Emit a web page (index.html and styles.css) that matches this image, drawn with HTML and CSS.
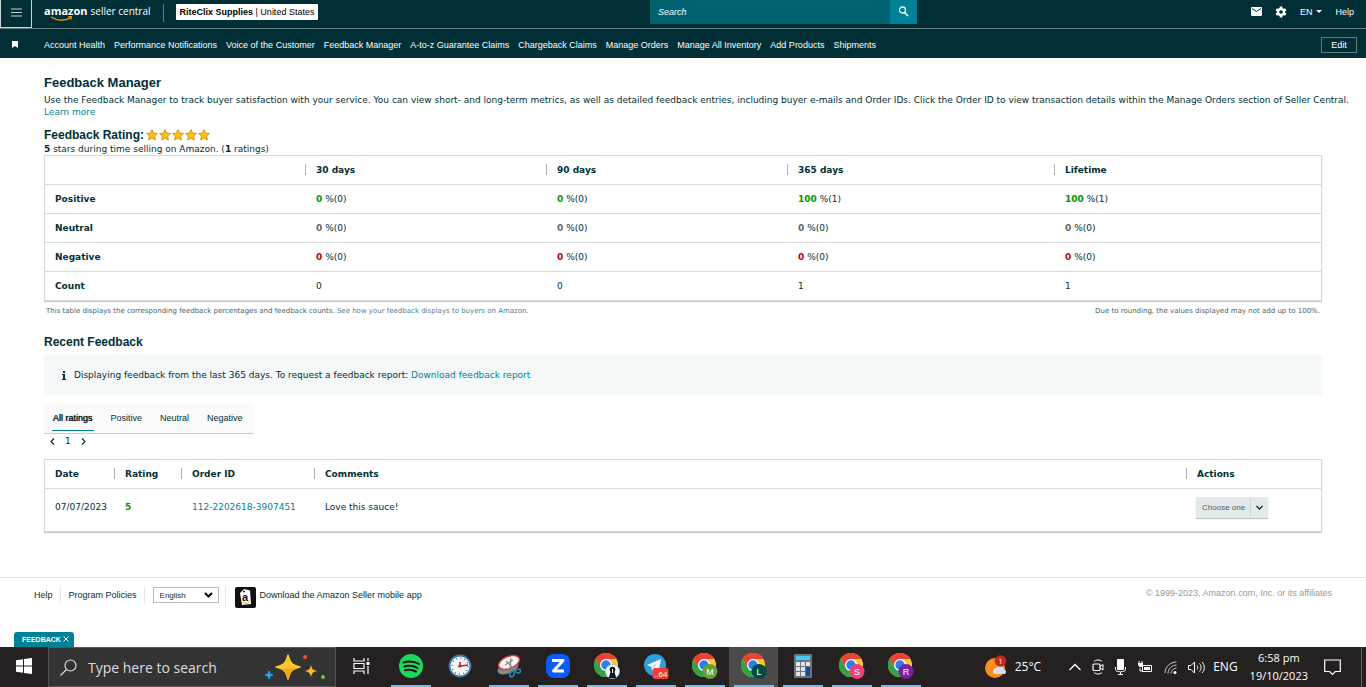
FILE: index.html
```html
<!DOCTYPE html>
<html lang="en">
<head>
    <meta charset="UTF-8">
    <meta name="viewport" content="width=device-width, initial-scale=1.0">
    <title>Feedback Manager</title>
    <link rel="stylesheet" href="styles.css">
</head>
<body>

<!-- shared shapes -->
<svg class="defs" aria-hidden="true">
    <symbol id="star" viewBox="0 0 12 12"><path d="M6 .6l1.6 3.5 3.9.4-2.9 2.6.8 3.9L6 9.1 2.6 11l.8-3.9L.5 4.5l3.9-.4z" fill="#fcbf14" stroke="#d98d16" stroke-width=".9"/></symbol>
    <symbol id="chrome" viewBox="0 0 24 24">
        <circle cx="12" cy="12" r="12" fill="#fcc934"/>
        <path d="M12 6H22.4A12 12 0 0 0 1.6 6L6.8 15z" fill="#ea4335"/>
        <path d="M1.6 6A12 12 0 0 0 12 24L17.2 15 6.8 15z" fill="#34a049"/>
        <circle cx="12" cy="12" r="6" fill="#fff"/>
        <circle cx="12" cy="12" r="4.7" fill="#2f7de9"/>
    </symbol>
</svg>

<header>
    <div class="topbar">
        <div class="brand">
            <button class="menu" aria-label="Menu"><svg width="11" height="9" viewBox="0 0 11 9"><path d="M0 1h11M0 4.500h11M0 8h11" stroke="#dfe5e6" stroke-width=".9"/></svg></button>
            <a class="logo" href="#"><b>amazon</b><span>seller central</span>
                <svg width="24" height="6" viewBox="0 0 24 6"><path d="M1 1c6 4 14 4 19 1M18 .8l3.500-.2-.8 3" fill="none" stroke="#f90" stroke-width="1.200"/></svg>
            </a>
            <button class="account"><b>RiteClix Supplies</b> | United States</button>
        </div>
        <form class="search">
            <input type="text" placeholder="Search" aria-label="Search">
            <button type="button" aria-label="Go"><svg width="11" height="11" viewBox="0 0 11 11"><circle cx="4.500" cy="4" r="3" fill="none" stroke="#fff" stroke-width="1.300"/><path d="M6.500 6.500l3.500 3.500" stroke="#fff" stroke-width="1.600"/></svg></button>
        </form>
        <div class="tools">
            <a href="#" aria-label="Messages"><svg width="11" height="9" viewBox="0 0 11 9"><rect width="11" height="9" rx="1" fill="#fff"/><path d="M1 1.500l4.500 3L10 1.500" fill="none" stroke="#002f36"/></svg></a>
            <a href="#" aria-label="Settings"><svg width="12" height="12" viewBox="0 0 12 12"><g stroke="#fff" stroke-width="2.600"><path d="M6 .5v11M1.200 3.300l9.600 5.400M10.800 3.300L1.200 8.700"/></g><circle cx="6" cy="6" r="4.200" fill="#fff"/><circle cx="6" cy="6" r="1.800" fill="#002f36"/></svg></a>
            <a href="#">EN <svg width="6" height="3" viewBox="0 0 6 3"><path d="M0 0h6L3 3z" fill="#fff"/></svg></a>
            <a href="#">Help</a>
        </div>
    </div>
    <nav class="shortcuts">
        <svg class="bookmark" width="6" height="7" viewBox="0 0 6 7"><path d="M0 0h6v7L3 5 0 7z" fill="#fff"/></svg>
        <a href="#">Account Health</a>
        <a href="#">Performance Notifications</a>
        <a href="#">Voice of the Customer</a>
        <a href="#">Feedback Manager</a>
        <a href="#">A-to-z Guarantee Claims</a>
        <a href="#">Chargeback Claims</a>
        <a href="#">Manage Orders</a>
        <a href="#">Manage All Inventory</a>
        <a href="#">Add Products</a>
        <a href="#">Shipments</a>
        <button class="edit">Edit</button>
    </nav>
</header>

<main>
    <h1>Feedback Manager</h1>
    <p class="intro">Use the Feedback Manager to track buyer satisfaction with your service. You can view short- and long-term metrics, as well as detailed feedback entries, including buyer e-mails and Order IDs. Click the Order ID to view transaction details within the Manage Orders section of Seller Central.<br><a href="#">Learn more</a></p>

    <h2 class="rating">Feedback Rating:
        <span class="stars"><svg><use href="#star"/></svg><svg><use href="#star"/></svg><svg><use href="#star"/></svg><svg><use href="#star"/></svg><svg><use href="#star"/></svg></span>
    </h2>
    <p class="summary"><b>5</b> stars during time selling on Amazon. (<b>1</b> ratings)</p>

    <table class="metrics">
        <thead>
            <tr><td></td><th>30 days</th><th>90 days</th><th>365 days</th><th>Lifetime</th></tr>
        </thead>
        <tbody>
            <tr class="positive"><th>Positive</th><td><b>0</b> %(0)</td><td><b>0</b> %(0)</td><td><b>100</b> %(1)</td><td><b>100</b> %(1)</td></tr>
            <tr class="neutral"><th>Neutral</th><td><b>0</b> %(0)</td><td><b>0</b> %(0)</td><td><b>0</b> %(0)</td><td><b>0</b> %(0)</td></tr>
            <tr class="negative"><th>Negative</th><td><b>0</b> %(0)</td><td><b>0</b> %(0)</td><td><b>0</b> %(0)</td><td><b>0</b> %(0)</td></tr>
            <tr><th>Count</th><td>0</td><td>0</td><td>1</td><td>1</td></tr>
        </tbody>
    </table>
    <div class="notes">
        <span>This table displays the corresponding feedback percentages and feedback counts. <a href="#">See how your feedback displays to buyers on Amazon.</a></span>
        <span>Due to rounding, the values displayed may not add up to 100%.</span>
    </div>

    <h2>Recent Feedback</h2>
    <div class="info">
        <svg width="4" height="9" viewBox="0 0 4 9"><path d="M1 0h2v2H1zM0 3h3v5h1v1H0V8h1V4H0z" fill="#002f36"/></svg>
        <span>Displaying feedback from the last 365 days. To request a feedback report: <a href="#">Download feedback report</a></span>
    </div>

    <div class="tabs">
        <a class="active" href="#">All ratings</a>
        <a href="#">Positive</a>
        <a href="#">Neutral</a>
        <a href="#">Negative</a>
    </div>
    <div class="pager">
        <button aria-label="Previous"><svg width="5" height="7" viewBox="0 0 5 7"><path d="M4 .5l-3 3 3 3" fill="none" stroke="#002f36" stroke-width="1.200"/></svg></button>
        <span>1</span>
        <button aria-label="Next"><svg width="5" height="7" viewBox="0 0 5 7"><path d="M1 .5l3 3-3 3" fill="none" stroke="#002f36" stroke-width="1.200"/></svg></button>
    </div>

    <table class="entries">
        <thead>
            <tr><th>Date</th><th>Rating</th><th>Order ID</th><th>Comments</th><th>Actions</th></tr>
        </thead>
        <tbody>
            <tr>
                <td>07/07/2023</td>
                <td class="score">5</td>
                <td><a href="#">112-2202618-3907451</a></td>
                <td>Love this sauce!</td>
                <td><button class="choose"><span>Choose one</span><svg width="7" height="5" viewBox="0 0 7 5"><path d="M.5 1l3 3 3-3" fill="none" stroke="#002f36" stroke-width="1.300"/></svg></button></td>
            </tr>
        </tbody>
    </table>
</main>

<footer>
    <a href="#">Help</a>
    <a href="#">Program Policies</a>
    <div class="language"><select aria-label="Language"><option>English</option></select><svg width="9" height="6" viewBox="0 0 9 6"><path d="M1 1l3.500 3.500L8 1" fill="none" stroke="#000" stroke-width="2"/></svg></div>
    <a class="app" href="#"><svg width="21" height="21" viewBox="0 0 21 21"><rect width="21" height="21" rx="2" fill="#111"/><path d="M5 6l4-4 6 1.500L16 17l-9 1z" fill="#fff"/><circle cx="9" cy="4.500" r="1" fill="#111"/><text x="7" y="14" font-size="11" font-weight="bold" fill="#111">a</text><path d="M8 15.500c2 1.200 4 1 6-.5" fill="none" stroke="#f90"/></svg>Download the Amazon Seller mobile app</a>
    <span class="copyright">© 1999-2023, Amazon.com, Inc. or its affiliates</span>
</footer>

<button class="feedback-tab">FEEDBACK <svg width="6" height="6" viewBox="0 0 6 6"><path d="M.5 .5l5 5M5.500 .5l-5 5" stroke="#fff"/></svg></button>

<div class="taskbar">
    <button class="start" aria-label="Start"><svg width="16" height="16" viewBox="0 0 16 16"><path d="M0 2.200l7-1v6.300H0zM8 1.100L16 0v7.500H8zM0 8.500h7v6.300l-7-1zM8 8.500h8V16l-8-1.100z" fill="#fff"/></svg></button>
    <label class="task-search">
        <svg width="17" height="17" viewBox="0 0 17 17"><circle cx="10.500" cy="6.500" r="5.500" fill="none" stroke="#ddd" stroke-width="1.200"/><path d="M6.500 10.500l-6 6" stroke="#ddd" stroke-width="1.200"/></svg>
        <input type="text" placeholder="Type here to search">
        <svg width="60" height="26" viewBox="0 0 60 26"><path d="M23 1c2 8 4 10 12 12-8 2-10 4-12 12-2-8-4-10-12-12 8-2 10-4 12-12z" fill="#fdc52f" stroke="#fdc52f" stroke-width="1.500" stroke-linejoin="round"/><path d="M23 25c-2-8-4-10-12-12 8 3 16 2 24 0-8 2-10 4-12 12z" fill="#f5a318"/><path d="M46 11c1 4 2 5 6 6-4 1-5 2-6 6-1-4-2-5-6-6 4-1 5-2 6-6z" fill="#fdb92b"/><path d="M4 17c1 3 1 3 4 4-3 1-3 1-4 4-1-3-1-3-4-4 3-1 3-1 4-4z" fill="#1ba9f5" stroke="#1ba9f5"/><circle cx="40" cy="3" r="2" fill="#f2592a"/><circle cx="58" cy="23" r="2" fill="#7cc142"/></svg>
    </label>
    <button class="task" aria-label="Task view"><svg width="17" height="16" viewBox="0 0 17 16"><path d="M1 0v3h10V0M1 16v-3h10v3M1 5.500h10v5H1zM15 0v3M15 8v8" fill="none" stroke="#fff" stroke-width="1.200"/><rect x="13.500" y="4" width="3" height="3" fill="#fff"/></svg></button>
    <button class="task open" aria-label="Spotify"><svg width="24" height="24" viewBox="0 0 24 24"><circle cx="12" cy="12" r="12" fill="#1ed760"/><path d="M4.500 8.500c5-1.500 11-1 15.500 1.500M5.500 12.500c4.500-1.200 9-.8 13 1.500M6 16.200c4-1 7.500-.6 11 1.300" fill="none" stroke="#191414" stroke-width="2" stroke-linecap="round"/></svg></button>
    <button class="task" aria-label="Clock"><svg width="24" height="24" viewBox="0 0 24 24"><circle cx="12" cy="12" r="10.500" fill="#f4f6f8" stroke="#3f78ad" stroke-width="1.800"/><circle cx="12" cy="12" r="8" fill="none" stroke="#555" stroke-width="1.300" stroke-dasharray="1 3.200"/><path d="M10 12.500l10-1.500M12 12V8" stroke="#c4242b" stroke-width="1.500"/><circle cx="12" cy="12" r="1.500" fill="#c4242b"/></svg></button>
    <button class="task open" aria-label="Snipping Tool"><svg width="24" height="24" viewBox="0 0 24 24"><ellipse cx="11" cy="14" rx="11" ry="5.500" fill="#888" transform="rotate(-22 11 14)"/><ellipse cx="12" cy="8.500" rx="11" ry="6" fill="#f3f3f3" stroke="#d23b40" stroke-width="1.400" transform="rotate(-22 12 8.500)"/><path d="M9 7l8 8M14 4l-1 12M8 11l8-5" stroke="#888" stroke-width="1.200"/><ellipse cx="15" cy="20" rx="2" ry="3" fill="none" stroke="#2286b8" stroke-width="1.600" transform="rotate(25 15 20)"/><ellipse cx="21" cy="17" rx="2.500" ry="2" fill="none" stroke="#2286b8" stroke-width="1.600"/></svg></button>
    <button class="task open" aria-label="Zoom"><svg width="24" height="24" viewBox="0 0 24 24"><rect width="24" height="24" rx="8" fill="#0b5cff"/><path d="M6 6.500h11L7.500 17H18" fill="none" stroke="#fff" stroke-width="3" stroke-linejoin="round"/></svg></button>
    <button class="task open" aria-label="Chrome"><svg width="26" height="26" viewBox="0 0 26 26"><use href="#chrome" width="24" height="24"/><circle cx="18.500" cy="18.500" r="7" fill="#f5f8fa" stroke="#8ccbe8" stroke-width=".8"/><circle cx="18.500" cy="16.500" r="2.800" fill="#111"/><path d="M16.800 18h3.400l2 7h-7.400z" fill="#111"/><path d="M18.500 16v4" stroke="#fff"/></svg></button>
    <button class="task open" aria-label="Telegram"><svg width="26" height="26" viewBox="0 0 26 26"><circle cx="12" cy="12" r="11" fill="#2ba0d9"/><path d="M4 12l14-6-2.500 13-4-3.500L9 18l-.5-4z" fill="#fff"/><path d="M8.500 14L15 9l-4.500 6" fill="#b5d4e8"/><rect x="9.500" y="15" width="16" height="11" rx="2.500" fill="#f13b36"/><text x="11" y="24" font-size="8" fill="#fff">..64</text></svg></button>
    <button class="task open" aria-label="Chrome, profile M"><svg width="26" height="26" viewBox="0 0 26 26"><use href="#chrome" width="24" height="24"/><circle cx="18" cy="18.500" r="7.500" fill="#679f38"/><text x="18" y="21.500" text-anchor="middle" font-size="9" fill="#fff">M</text></svg></button>
    <button class="task open current" aria-label="Chrome, profile L"><svg width="26" height="26" viewBox="0 0 26 26"><use href="#chrome" width="24" height="24"/><circle cx="18" cy="18.500" r="7.500" fill="#004d40"/><text x="18" y="21.500" text-anchor="middle" font-size="9" fill="#fff">L</text></svg></button>
    <button class="task open" aria-label="Calculator"><svg width="18" height="24" viewBox="0 0 18 24"><rect width="18" height="24" rx="1" fill="#69747d"/><rect x="2" y="2" width="14" height="4" fill="#43cdf5"/><path d="M2 8h4v4H2zM7 8h4v4H7zM12 8h4v4h-4zM2 13h4v4H2zM7 13h4v4H7zM2 18h4v4H2zM7 18h4v4H7z" fill="#dfe4e8"/><path d="M12 13h4v9h-4z" fill="#164b8f"/></svg></button>
    <button class="task open" aria-label="Chrome, profile S"><svg width="26" height="26" viewBox="0 0 26 26"><use href="#chrome" width="24" height="24"/><circle cx="18" cy="18.500" r="7.500" fill="#ec407a"/><text x="18" y="21.500" text-anchor="middle" font-size="9" fill="#fff">S</text></svg></button>
    <button class="task open" aria-label="Chrome, profile R"><svg width="26" height="26" viewBox="0 0 26 26"><use href="#chrome" width="24" height="24"/><circle cx="18" cy="18.500" r="7.500" fill="#7b1fa2"/><text x="18" y="21.500" text-anchor="middle" font-size="9" fill="#fff">R</text></svg></button>
    <div class="tray">
        <span class="weather"><svg width="22" height="24" viewBox="0 0 22 24"><circle cx="10" cy="13" r="10" fill="#f58f1d"/><path d="M9 19a3.500 3.500 0 0 1 2-6 4.500 4.500 0 0 1 8 1 3 3 0 0 1 1 5z" fill="#cfe0f8"/><circle cx="15.500" cy="6" r="5.800" fill="#c42b1c"/><text x="15.500" y="9" text-anchor="middle" font-size="8" fill="#fff">1</text></svg>25°C</span>
        <span class="status">
            <svg width="12" height="8" viewBox="0 0 12 8"><path d="M.5 7L6 1.500 11.500 7" fill="none" stroke="#fff" stroke-width="1.300"/></svg>
            <svg width="12" height="16" viewBox="0 0 12 16"><rect x="1" y="5" width="7" height="6.500" rx="1" fill="none" stroke="#fff" stroke-width="1.200"/><path d="M8 7.500l3-2v5.500l-3-2M2 2.500c2-2 6-2 8 0M2 13.500c2 2 6 2 8 0" fill="none" stroke="#fff"/></svg>
            <svg width="11" height="16" viewBox="0 0 11 16"><rect x="2" y="0" width="7" height="11" rx="1" fill="#fff"/><path d="M.5 8v2.500c0 3 10 3 10 0V8M5.500 13v2.500M3 15.500h5" fill="none" stroke="#fff"/></svg>
            <svg width="16" height="12" viewBox="0 0 16 12"><path d="M5.500 4.500h9v6h-9zM3 7v3h3M2 0v3M5 0v3" fill="none" stroke="#fff"/><path d="M1 2h5v2L4.500 6h-2L1 4zM7 6h6v3H7z" fill="#fff"/></svg>
            <svg width="13" height="13" viewBox="0 0 13 13"><path d="M1 12C1 6 6 1 12.500 1M4 12.500C4 8 8 4 12.500 4M7 12.500c0-3 3-5.500 5.500-5.500" fill="none" stroke="#ccc"/><circle cx="11" cy="11.500" r="1.500" fill="#fff"/></svg>
            <svg width="17" height="13" viewBox="0 0 17 13"><path d="M.5 4.500h2.500l3.500-3.500v11l-3.500-3.500H.5zM9 4.500c1 1 1 3 0 4M11.500 2.500c2 2 2 6 0 8M14 1c3 3 3 8 0 11" fill="none" stroke="#fff"/></svg>
        </span>
        <span>ENG</span>
        <span class="clock">6:58 pm<br>19/10/2023</span>
        <button class="notices" aria-label="Notifications"><svg width="17" height="17" viewBox="0 0 17 17"><path d="M.7 1h15.600v11.500h-5L8.500 15.500l-3-3H.7z" fill="none" stroke="#fff" stroke-width="1.200"/></svg></button>
    </div>
</div>

</body>
</html>
```
FILE: styles.css
```css
* {
    box-sizing: border-box;
}
body {
    margin: 0;
    min-height: 100vh;
    display: flex;
    flex-direction: column;
    font-family: "DejaVu Sans", Verdana, sans-serif;
    font-size: 9px;
    line-height: 12px;
    color: #002f36;
    background-color: #fff;
}
button, input, select {
    font-family: "Liberation Sans", Arial, sans-serif;
    font-size: 9px;
    padding: 0;
    border: none;
    border-radius: 0;
    background: none;
    color: inherit;
}
button {
    cursor: pointer;
}
a {
    color: #008296;
    text-decoration: none;
}
svg {
    flex: none;
}
.defs {
    display: none;
}

/* header */
header {
    background-color: #002f36;
    color: #fff;
    font-family: "Liberation Sans", Arial, sans-serif;
}
header a {
    color: #fff;
}
.topbar {
    display: grid;
    grid-template-columns: 650fr 267px 449fr;
    height: 29px;
    border-bottom: 1px solid #66797c;
}
.brand {
    display: flex;
    align-items: flex-start;
}
.menu {
    width: 32px;
    height: 28px;
    border: 1px solid #ccd5d6;
    border-top: none;
}
.logo {
    display: grid;
    grid-template-columns: auto auto;
    column-gap: 3px;
    margin: 4px 12px 0;
    padding-right: 12px;
    border-right: 1px solid #66797c;
    font-family: "Open Sans", sans-serif;
    font-size: 11px;
    line-height: 14px;
}
.logo span {
    font-size: 10px;
}
.logo svg {
    margin: -2px 0 0 6px;
}
.account {
    margin-top: 4px;
    height: 16px;
    padding: 0 4px;
    background-color: #fff;
    border-radius: 1px;
    color: #000;
}
.search {
    display: flex;
    height: 24px;
}
.search input {
    flex: 1;
    min-width: 0;
    padding: 0 8px;
    background-color: #006170;
}
.search input::placeholder {
    color: #fff;
    font-style: italic;
    opacity: 1;
}
.search button {
    width: 27px;
    background-color: #008296;
}
.tools {
    display: flex;
    justify-content: flex-end;
    align-items: center;
    gap: 13px;
    height: 23px;
    padding-right: 12px;
}
.tools a {
    display: flex;
    align-items: center;
    gap: 4px;
}
.shortcuts {
    display: flex;
    align-items: center;
    gap: 9px;
    height: 29px;
    padding: 2px 9px 0 12px;
    white-space: nowrap;
}
.bookmark {
    margin-right: 17px;
}
.edit {
    margin-left: auto;
    width: 36px;
    height: 16px;
    border: 1px solid #66797c;
}

/* page */
main {
    flex: 1;
    padding: 17px 44px 44px;
}
h1, h2 {
    margin: 0;
    font-family: "Liberation Sans", Arial, sans-serif;
    font-size: 13px;
    line-height: 16px;
}
h2 {
    font-size: 12px;
}
p {
    margin: 0;
}
.intro {
    margin: 3px 0 9px;
    white-space: nowrap;
}
.rating {
    display: flex;
    align-items: center;
    gap: 2px;
}
.stars {
    display: flex;
    gap: 1px;
}
.stars svg {
    width: 12px;
    height: 12px;
}
table {
    width: 100%;
    table-layout: fixed;
    border-collapse: separate;
    border-spacing: 0;
    border: 1px solid #d5dbdb;
    box-shadow: 0 1px 1px #ccc;
}
th, td {
    height: 29px;
    padding: 0 11px;
    text-align: left;
}
th:first-child, td:first-child {
    padding: 0 10px;
}
thead th, thead td {
    height: 28px;
}
tbody th, tbody td {
    border-top: 1px solid #d5dbdb;
}
thead th {
    background: linear-gradient(#aab7b8, #aab7b8) no-repeat 0 8px / 1px 11px;
}
.metrics th:nth-child(1), .metrics td:nth-child(1) {
    width: 260px;
}
.metrics thead th:nth-child(2), .metrics thead th:nth-child(3) {
    width: 241px;
}
.positive b, .score {
    color: #090;
    font-weight: bold;
}
.neutral b {
    color: #666;
}
.negative b {
    color: #b00;
}
.notes {
    display: flex;
    justify-content: space-between;
    margin: 4px 2px 17px;
    font-size: 7px;
    color: #4a5f63;
}
.notes a {
    color: #4a7f95;
}
.info {
    display: flex;
    align-items: center;
    gap: 8px;
    height: 40px;
    margin-top: 5px;
    padding: 0 18px;
    background-color: #f4f8f9;
}
.tabs {
    display: flex;
    gap: 16px;
    width: fit-content;
    height: 30px;
    margin-top: 9px;
    padding: 0 10px 2px 8px;
    background-color: #fafafa;
    border-bottom: 1px solid #ccc;
    font-family: "Liberation Sans", Arial, sans-serif;
}
.tabs a {
    padding: 8px 1px 0;
    color: #002f36;
}
.tabs .active {
    border-bottom: 1px solid #008296;
    color: #000;
    text-shadow: 0 0 1px #002f36;
}
.pager {
    display: flex;
    align-items: center;
    gap: 10px;
    height: 14px;
    margin-bottom: 11px;
    padding-left: 6px;
}
.pager button {
    display: flex;
}
.entries th:nth-child(1) {
    width: 69px;
    background: none;
}
.entries th:nth-child(2) {
    width: 67px;
}
.entries th:nth-child(3) {
    width: 133px;
}
.entries th:nth-child(5) {
    width: 135px;
}
.entries tbody td {
    height: 43px;
    padding-bottom: 7px;
}
.entries td:last-child {
    padding-left: 10px;
}
.choose {
    display: flex;
    align-items: center;
    height: 21px;
    margin-top: 2px;
    background-color: #e3eaeb;
    border-radius: 1px;
    box-shadow: 0 1px 1px #bbb;
    font-size: 8px;
    color: #4a5f63;
}
.choose span {
    padding: 0 5px 0 6px;
    border-right: 1px solid #ccd5d6;
    line-height: 20px;
}
.choose svg {
    margin: 0 5px;
}

/* footer */
footer {
    display: flex;
    align-items: flex-start;
    height: 55px;
    padding: 9px 34px 0;
    border-top: 1px solid #e3e6e6;
    font-family: "Liberation Sans", Arial, sans-serif;
    line-height: 16px;
}
footer a {
    padding-right: 7px;
    border-right: 1px solid #e3e6e6;
    margin-right: 8px;
    color: #002f36;
}
.language {
    display: flex;
    align-items: center;
    width: 66px;
    height: 16px;
    border: 1px solid #bbb;
}
.language select {
    flex: 1;
    appearance: none;
    padding-left: 6px;
    font-size: 8px;
}
.language svg {
    margin-right: 5px;
}
.app {
    display: flex;
    gap: 4px;
    margin-left: 6px;
    padding-left: 9px;
    border-left: 1px solid #e3e6e6;
    border-right: none;
}
.copyright {
    margin-left: auto;
    line-height: 12px;
    color: #999;
}
.feedback-tab {
    align-self: flex-start;
    height: 15px;
    margin-left: 14px;
    padding: 0 5px 0 8px;
    background-color: #008296;
    border-radius: 3px 3px 0 0;
    color: #fff;
    font-size: 7px;
    font-weight: bold;
}

/* taskbar */
.taskbar {
    display: flex;
    height: 40px;
    background-color: #242120;
    color: #fff;
    font-family: "Open Sans", "Segoe UI", sans-serif;
    font-size: 12px;
    line-height: 18px;
}
.start {
    flex: none;
    width: 48px;
}
.task-search {
    display: flex;
    align-items: center;
    flex: none;
    width: 288px;
    margin-right: 1px;
    padding: 0 10px 0 11px;
    background-color: #333;
    border: 1px solid #555;
}
.task-search input {
    flex: 1;
    min-width: 0;
    padding-left: 11px;
    font-family: inherit;
    font-size: 14px;
}
.task-search input::placeholder {
    color: #ddd;
    opacity: 1;
}
.task {
    display: flex;
    align-items: center;
    justify-content: center;
    flex: none;
    width: 49px;
    border-bottom: 2px solid transparent;
}
.open {
    background: linear-gradient(#76b9ed, #76b9ed) no-repeat center bottom / 40px 2px border-box;
}
.current {
    background-color: #4d4b4a;
}
.tray {
    display: flex;
    align-items: center;
    gap: 8px;
    margin-left: auto;
    margin-right: 4px;
    border-right: 1px solid #666;
}
.weather {
    display: flex;
    align-items: center;
    gap: 8px;
    margin-right: 20px;
}
.status {
    display: flex;
    align-items: center;
    gap: 11px;
}
.clock {
    text-align: center;
    margin: 0 8px 0 4px;
    font-size: 11px;
}
.notices {
    display: flex;
    margin-right: 20px;
}
```
